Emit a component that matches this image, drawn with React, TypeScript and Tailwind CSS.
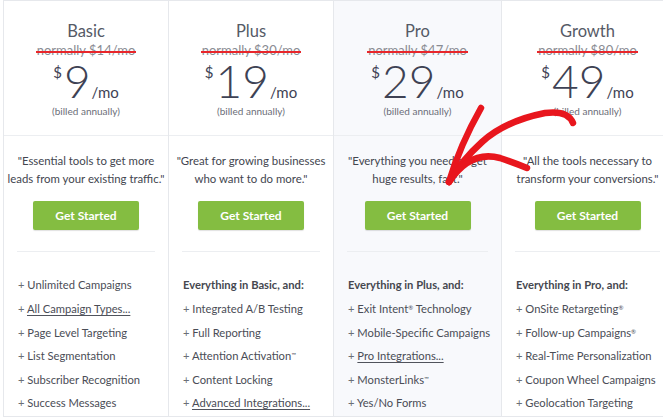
import React from "react";

type Plan = {
  name: string;
  was: string;
  price: string;
  quote: string[];
  heading?: string;
  features: { text: React.ReactNode; link?: boolean }[];
  highlight?: boolean;
  width: string;
};

const plans: Plan[] = [
  {
    name: "Basic",
    was: "normally $14/mo",
    price: "9",
    quote: ['"Essential tools to get more', 'leads from your existing traffic."'],
    features: [
      { text: "Unlimited Campaigns" },
      { text: "All Campaign Types...", link: true },
      { text: "Page Level Targeting" },
      { text: "List Segmentation" },
      { text: "Subscriber Recognition" },
      { text: "Success Messages" },
    ],
    width: "w-[166px]",
  },
  {
    name: "Plus",
    was: "normally $30/mo",
    price: "19",
    quote: ['"Great for growing businesses', 'who want to do more."'],
    heading: "Everything in Basic, and:",
    features: [
      { text: "Integrated A/B Testing" },
      { text: "Full Reporting" },
      { text: <>Attention Activation<sup className="text-[6px]">™</sup></> },
      { text: "Content Locking" },
      { text: "Advanced Integrations...", link: true },
    ],
    width: "w-[165px]",
  },
  {
    name: "Pro",
    was: "normally $47/mo",
    price: "29",
    quote: ['"Everything you need to get', 'huge results, fast."'],
    heading: "Everything in Plus, and:",
    features: [
      { text: <>Exit Intent<sup className="text-[6px]">®</sup> Technology</> },
      { text: "Mobile-Specific Campaigns" },
      { text: "Pro Integrations...", link: true },
      { text: <>MonsterLinks<sup className="text-[6px]">™</sup></> },
      { text: "Yes/No Forms" },
    ],
    highlight: true,
    width: "w-[168px]",
  },
  {
    name: "Growth",
    was: "normally $80/mo",
    price: "49",
    quote: ['"All the tools necessary to', 'transform your conversions."'],
    heading: "Everything in Pro, and:",
    features: [
      { text: <>OnSite Retargeting<sup className="text-[6px]">®</sup></> },
      { text: <>Follow-up Campaigns<sup className="text-[6px]">®</sup></> },
      { text: "Real-Time Personalization" },
      { text: "Coupon Wheel Campaigns" },
      { text: "Geolocation Targeting" },
    ],
    width: "w-[172px]",
  },
];

function Column({ p, first }: { p: Plan; first: boolean }) {
  return (
    <div
      className={`${p.width} shrink-0 flex flex-col border-r border-[#e6e8ec] ${
        first ? "border-l" : ""
      } ${p.highlight ? "bg-[#f8f9fc]" : "bg-white"}`}
    >
      <div className="h-[136px] flex flex-col items-center pt-[19px] border-b border-[#eceef1]">
        <div className="text-[16.5px] leading-[22px] text-[#555a66]">{p.name}</div>
        <div className="relative text-[13px] leading-[17px] text-[#8a8c93]">
          {p.was}
          <div className="absolute left-[-1px] right-[-1px] top-[9px] h-[1.5px] bg-[#e8262b]" />
        </div>
        <div className="flex items-start text-[#3e4254] h-[44px]">
          <span className="text-[15px] leading-[15px] mt-[6px] mr-[2px]">$</span>
          <span className="text-[46px] leading-[44px] font-light">{p.price}</span>
          <span className="text-[15px] leading-[12px] mt-[27px] ml-[1px]">/mo</span>
        </div>
        <div className="text-[10px] leading-[12px] text-[#6b6e78] mt-[2px]">(billed annually)</div>
      </div>
      <div className="mx-[13px] border-b border-[#eceef1] pt-[16px] pb-[21px] flex flex-col items-center">
        <div className="text-[11.4px] leading-[18px] text-[#43464f] text-center whitespace-nowrap">
          {p.quote.map((q, i) => (
            <div key={i}>{q}</div>
          ))}
        </div>
        <button className="mt-[13px] w-[106px] h-[29px] bg-[#84bd41] text-white text-[12px] font-bold rounded-[2px] shadow-[0_1px_1px_rgba(0,0,0,0.12)]">
          Get Started
        </button>
      </div>
      <div className="px-[14px] pt-[21px] pb-[1px] text-[11.2px] leading-[23.6px] text-[#4a4d56] whitespace-nowrap">
        {p.heading && <div className="font-bold text-[#45474f]">{p.heading}</div>}
        {p.features.map((f, i) => (
          <div key={i}>
            <span className="text-[#6b6e76]">+ </span>
            <span className={f.link ? "underline underline-offset-2 decoration-[#50535c]" : ""}>{f.text}</span>
          </div>
        ))}
      </div>
    </div>
  );
}

export default function App() {
  return (
    <div
      className="relative w-[663px] h-[419px] overflow-hidden bg-white pl-[3px]"
      style={{ fontFamily: "Lato, 'Open Sans', sans-serif" }}
    >
      <div className="flex border-t border-b border-[#e6e8ec] h-[417px] w-[680px]">
        {plans.map((p, i) => (
          <Column key={p.name} p={p} first={i === 0} />
        ))}
      </div>
      <svg className="absolute left-0 top-0 pointer-events-none" width="663" height="419" viewBox="0 0 663 419">
        <g fill="none" stroke="#e8161d" strokeWidth="6.5" strokeLinecap="round" strokeLinejoin="round">
          <path d="M573 123 Q568 110 545 113 Q505 121 482 142 Q462 160 449 182" />
          <path d="M449 182 Q460 145 481 108" />
          <path d="M449 182 Q470 150 500 158 Q515 163 527 168" />
        </g>
      </svg>
    </div>
  );
}
